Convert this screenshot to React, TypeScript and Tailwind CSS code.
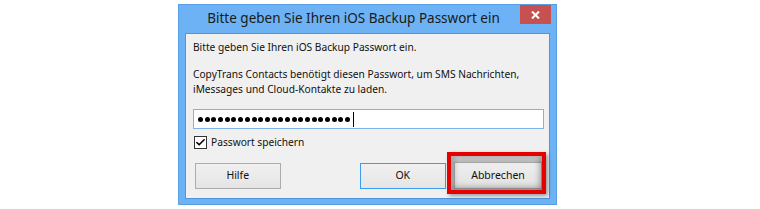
import { Check } from "lucide-react";

const font = { fontFamily: '"Noto Sans", "Open Sans", sans-serif' };

function Dots({ count }: { count: number }) {
  return (
    <div className="flex items-center gap-[1.7px]">
      {Array.from({ length: count }).map((_, i) => (
        <span key={i} className="w-[5px] h-[5px] rounded-full bg-black" />
      ))}
      <span className="ml-[1px] w-[1px] h-[15px] bg-black" />
    </div>
  );
}

export default function App() {
  return (
    <div className="w-[760px] h-[209px] bg-white overflow-hidden" style={font}>
      <div className="ml-[178px] mt-[4px] w-[379px] h-[201px] flex flex-col bg-[#6cb2f4] border border-[#5b9fe3]">
        {/* Title bar */}
        <div className="h-[28px] flex items-start">
          <div className="flex-1 h-[26px] flex items-center justify-center pl-[8px] text-[13.5px] text-[#1a1a1a] whitespace-nowrap">
            Bitte geben Sie Ihren iOS Backup Passwort ein
          </div>
          <button className="mr-[5px] w-[31px] h-[19px] bg-[#c75050] flex items-center justify-center text-white">
            <svg width="9" height="8" viewBox="0 0 9 8">
              <path d="M1 0.5 L8 7.5 M8 0.5 L1 7.5" stroke="white" strokeWidth="2" />
            </svg>
          </button>
        </div>

        {/* Content */}
        <div className="mx-[6px] mb-[5px] flex-1 bg-[#f0f0f0] border border-[#4f94dc] pt-[6px] px-[7px] text-[10.2px] leading-[15px] text-[#111] whitespace-nowrap">
          <p>Bitte geben Sie Ihren iOS Backup Passwort ein.</p>
          <p className="mt-[12px]">
            CopyTrans Contacts benötigt diesen Passwort, um SMS Nachrichten,
            <br />
            iMessages und Cloud-Kontakte zu laden.
          </p>

          <div className="mt-[12px] w-[351px] h-[20px] bg-white border border-[#7eb4ea] flex items-center pl-[4px]">
            <Dots count={23} />
          </div>

          <label className="mt-[6px] flex items-center gap-[4px] ml-[1px]">
            <span className="w-[13px] h-[13px] bg-white border border-[#333] flex items-center justify-center">
              <Check className="w-[11px] h-[11px] text-black" strokeWidth={3.5} />
            </span>
            <span>Passwort speichern</span>
          </label>

          <div className="mt-[12px] flex items-center">
            <button className="ml-[2px] w-[86px] h-[26px] border border-[#acacac] bg-gradient-to-b from-[#f0f0f0] to-[#e5e5e5] text-[10.5px]">
              Hilfe
            </button>
            <button className="ml-[79px] w-[87px] h-[26px] border border-[#3c9cf0] bg-gradient-to-b from-[#f0f0f0] to-[#e5e5e5] text-[10.5px]">
              OK
            </button>
            <div className="relative ml-[8px]">
              <button className="w-[88px] h-[27px] border border-[#acacac] bg-gradient-to-b from-[#eeeeee] to-[#e2e2e2] text-[10.5px] shadow-[0_0_4px_2px_rgba(0,0,0,0.25)]">
                Abbrechen
              </button>
              <div className="absolute left-[-7px] top-[-10px] right-[-4px] bottom-[-5px] border-[4px] border-[#e60000] shadow-[inset_0_0_6px_2px_rgba(0,0,0,0.35),2px_2px_4px_rgba(0,0,0,0.35)] pointer-events-none" />
            </div>
          </div>
        </div>
      </div>
    </div>
  );
}
